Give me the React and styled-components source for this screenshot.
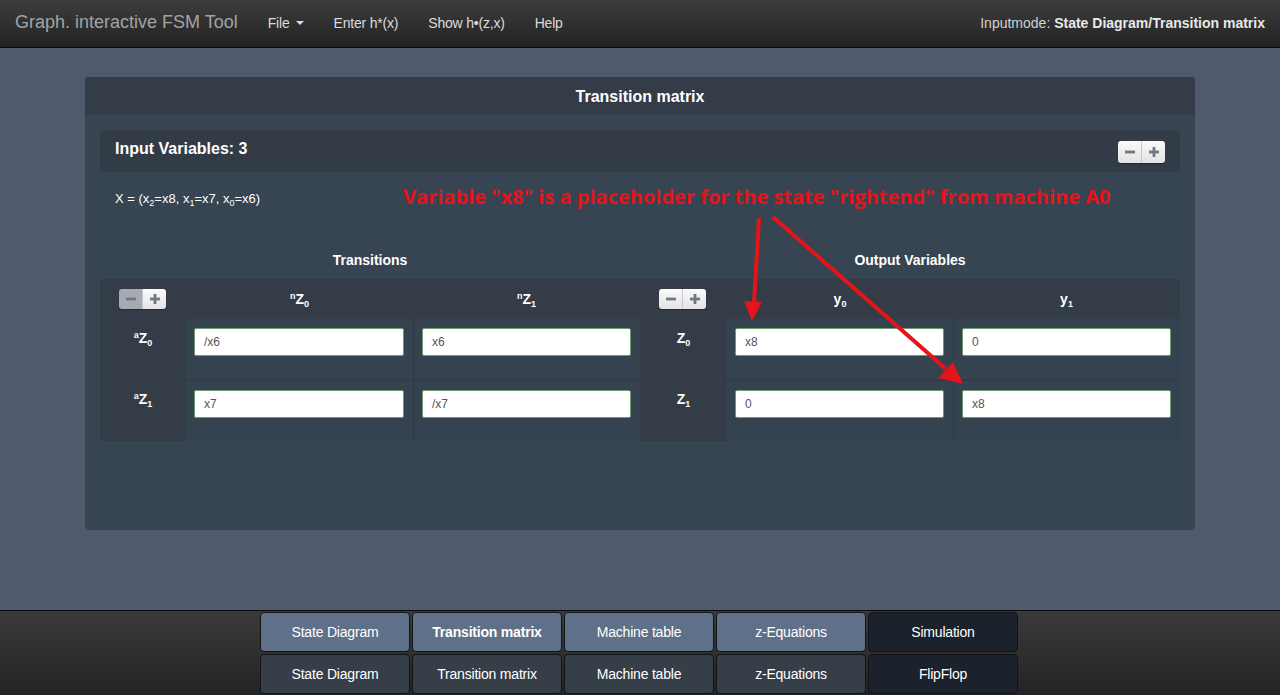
import React from "react";
import styled, { createGlobalStyle } from "styled-components";

const GlobalStyle = createGlobalStyle`
  html, body { margin: 0; padding: 0; }
  body {
    background: #4f5b6c;
    font-family: "Liberation Sans", Arial, sans-serif;
    color: #fff;
  }
  * { box-sizing: border-box; }
`;

const Page = styled.div`
  position: relative;
  height: 695px;
  display: flex;
  flex-direction: column;
  overflow: hidden;
`;

const Navbar = styled.div`
  height: 48px;
  flex: none;
  display: flex;
  align-items: center;
  padding: 0 15px 2px;
  background: linear-gradient(to bottom, #3d3d3d 0%, #222 100%);
  border-bottom: 1px solid #080808;
`;

const Brand = styled.div`
  font-size: 18px;
  color: #a3a3a3;
  margin-right: 30px;
`;

const NavItem = styled.div`
  font-size: 14px;
  letter-spacing: -0.2px;
  color: #dcdcdc;
  margin-right: 30px;
  display: flex;
  align-items: center;
`;

const Caret = styled.span`
  display: inline-block;
  width: 0;
  height: 0;
  margin-left: 6px;
  border-left: 4px solid transparent;
  border-right: 4px solid transparent;
  border-top: 4px solid #dcdcdc;
`;

const NavRight = styled.div`
  margin-left: auto;
  font-size: 14px;
  color: #d0d0d0;
  b { color: #e8e8e8; }
`;

const Main = styled.div`
  flex: 1;
  padding: 29px 85px 0;
`;

const Panel = styled.div`
  height: 453px;
  background: #374451;
  border-radius: 4px;
  overflow: hidden;
`;

const PanelHeader = styled.div`
  height: 38px;
  background: #333c47;
  display: flex;
  align-items: center;
  justify-content: center;
  padding-top: 2px;
  font-size: 16px;
  font-weight: bold;
  color: #fff;
`;

const PanelBody = styled.div`
  padding: 15px;
`;

const SectionHeader = styled.div`
  height: 42px;
  background: #333b46;
  border-radius: 4px 4px 0 0;
  display: flex;
  align-items: center;
  padding: 0 15px 4px;
  font-size: 16px;
  font-weight: bold;
`;

const BtnGroup = styled.div`
  margin-left: ${(p) => (p.$right ? "auto" : "0")};
  margin-top: ${(p) => (p.$right ? "6px" : "0")};
  display: flex;
  height: ${(p) => p.$h || 20}px;
  border-radius: 3px;
  overflow: hidden;
  box-shadow: 0 1px 1px rgba(0, 0, 0, 0.3);
`;

const PmBtn = styled.div`
  height: 100%;
  display: flex;
  align-items: center;
  justify-content: center;
  background: ${(p) =>
    p.$disabled
      ? "#a6abb1"
      : "linear-gradient(to bottom, #fafafa 0%, #e3e3e3 100%)"};
  border-right: ${(p) => (p.$first ? "1px solid #c8c8c8" : "none")};
  width: ${(p) => (p.$first ? 24 : 23)}px;
`;

const PmIcon = ({ plus }) => (
  <svg width="12" height="12" viewBox="0 0 12 12">
    <rect x="1" y="4.6" width="10" height="2.8" fill="#6e7984" />
    {plus && <rect x="4.6" y="1" width="2.8" height="10" fill="#6e7984" />}
  </svg>
);

const PlusMinus = ({ right, disabledMinus, h }) => (
  <BtnGroup $right={right} $h={h}>
    <PmBtn $first $disabled={disabledMinus}>
      <PmIcon />
    </PmBtn>
    <PmBtn>
      <PmIcon plus />
    </PmBtn>
  </BtnGroup>
);

const XRow = styled.div`
  height: 52px;
  display: flex;
  align-items: center;
  padding: 0 15px;
  font-size: 13px;
  color: #fff;
  sub { font-size: 9px; vertical-align: -3px; line-height: 0; }
`;

const Annotation = styled.div`
  margin-left: 143px;
  margin-top: -3px;
  font-family: "Open Sans", "Lato", sans-serif;
  font-weight: bold;
  font-size: 20px;
  letter-spacing: 0;
  color: #e5131a;
  white-space: nowrap;
`;

const Titles = styled.div`
  display: grid;
  grid-template-columns: 540px 540px;
  margin-top: 28px;
  height: 27px;
  align-items: start;
`;

const Title = styled.div`
  text-align: center;
  font-size: 14px;
  font-weight: bold;
  line-height: 16px;
`;

const Tables = styled.div`
  display: grid;
  grid-template-columns: 540px 540px;
`;

const Grid = styled.div`
  display: grid;
  grid-template-columns: ${(p) => p.$cols};
  grid-template-rows: 40px 61px 61px;
`;

const HeadCell = styled.div`
  background: #333c47;
  display: flex;
  align-items: center;
  justify-content: ${(p) => (p.$center ? "center" : "flex-start")};
  padding-left: ${(p) => (p.$center ? 0 : 19)}px;
  font-size: 14px;
  font-weight: bold;
  sup { font-size: 9px; vertical-align: 5px; line-height: 0; }
  sub { font-size: 9px; vertical-align: -3px; line-height: 0; }
`;

const RowHead = styled.div`
  background: #333c47;
  display: flex;
  justify-content: center;
  padding-top: 11px;
  font-size: 14px;
  font-weight: bold;
  sup { font-size: 9px; vertical-align: 5px; line-height: 0; }
  sub { font-size: 9px; vertical-align: -3px; line-height: 0; }
`;

const DataCell = styled.div`
  background: #35424f;
  padding: 9px 9px 0 8px;
  border-left: ${(p) => (p.$divider ? "1px solid #2e3944" : "none")};
  border-top: ${(p) => (p.$top ? "1px solid #2e3944" : "none")};
`;

const Field = styled.div`
  height: 28px;
  background: #fff;
  border: 1px solid #6e9a6e;
  border-radius: 2px;
  display: flex;
  align-items: center;
  padding-left: 9px;
  font-size: 12px;
  color: #555;
`;

const Footer = styled.div`
  height: 85px;
  flex: none;
  background: linear-gradient(to bottom, #3a3a3a 0%, #232323 100%);
  border-top: 1px solid #0a0a0a;
  display: flex;
  justify-content: center;
  padding-top: 1px;
`;

const FooterGrid = styled.div`
  display: grid;
  grid-template-columns: repeat(5, 150px);
  grid-template-rows: 40px 40px;
  gap: 2px;
  margin-left: -2px;
`;

const FBtn = styled.div`
  background: ${(p) => p.$bg};
  border: 1px solid #141414;
  border-radius: 4px;
  display: flex;
  align-items: center;
  justify-content: center;
  font-size: 14px;
  letter-spacing: -0.2px;
  color: #fff;
  font-weight: ${(p) => (p.$bold ? "bold" : "normal")};
`;

const Overlay = styled.svg`
  position: absolute;
  left: 0;
  top: 0;
  pointer-events: none;
`;

const Z = ({ pre, i }) => (
  <span>
    {pre && <sup>{pre}</sup>}Z<sub>{i}</sub>
  </span>
);

const Y = ({ i }) => (
  <span>
    y<sub>{i}</sub>
  </span>
);

export default function App() {
  const trans = [
    ["/x6", "x6"],
    ["x7", "/x7"],
  ];
  const outs = [
    ["x8", "0"],
    ["0", "x8"],
  ];
  const light = "#5f7189";
  const dark = "#1c222b";
  const mid = "#363e48";
  return (
    <Page>
      <GlobalStyle />
      <Navbar>
        <Brand>Graph. interactive FSM Tool</Brand>
        <NavItem>
          File <Caret />
        </NavItem>
        <NavItem>Enter h*(x)</NavItem>
        <NavItem>Show h•(z,x)</NavItem>
        <NavItem>Help</NavItem>
        <NavRight>
          Inputmode: <b>State Diagram/Transition matrix</b>
        </NavRight>
      </Navbar>
      <Main>
        <Panel>
          <PanelHeader>Transition matrix</PanelHeader>
          <PanelBody>
            <SectionHeader>
              Input Variables: 3
              <PlusMinus right h={22} />
            </SectionHeader>
            <XRow>
              <span>
                X = (x<sub>2</sub>=x8, x<sub>1</sub>=x7, x<sub>0</sub>=x6)
              </span>
              <Annotation>
                Variable "x8" is a placeholder for the state "rightend" from
                machine A0
              </Annotation>
            </XRow>
            <Titles>
              <Title>Transitions</Title>
              <Title>Output Variables</Title>
            </Titles>
            <Tables>
              <Grid $cols="86px 227px 227px">
                <HeadCell>
                  <PlusMinus disabledMinus />
                </HeadCell>
                <HeadCell $center>
                  <Z pre="n" i={0} />
                </HeadCell>
                <HeadCell $center>
                  <Z pre="n" i={1} />
                </HeadCell>
                {trans.map((row, r) => (
                  <React.Fragment key={r}>
                    <RowHead>
                      <Z pre="a" i={r} />
                    </RowHead>
                    {row.map((v, c) => (
                      <DataCell key={c} $divider={c > 0} $top={r > 0}>
                        <Field>{v}</Field>
                      </DataCell>
                    ))}
                  </React.Fragment>
                ))}
              </Grid>
              <Grid $cols="87px 226px 227px">
                <HeadCell>
                  <PlusMinus />
                </HeadCell>
                <HeadCell $center>
                  <Y i={0} />
                </HeadCell>
                <HeadCell $center>
                  <Y i={1} />
                </HeadCell>
                {outs.map((row, r) => (
                  <React.Fragment key={r}>
                    <RowHead>
                      <Z i={r} />
                    </RowHead>
                    {row.map((v, c) => (
                      <DataCell key={c} $divider={c > 0} $top={r > 0}>
                        <Field>{v}</Field>
                      </DataCell>
                    ))}
                  </React.Fragment>
                ))}
              </Grid>
            </Tables>
          </PanelBody>
        </Panel>
      </Main>
      <Footer>
        <FooterGrid>
          <FBtn $bg={light}>State Diagram</FBtn>
          <FBtn $bg={light} $bold>
            Transition matrix
          </FBtn>
          <FBtn $bg={light}>Machine table</FBtn>
          <FBtn $bg={light}>z-Equations</FBtn>
          <FBtn $bg={dark}>Simulation</FBtn>
          <FBtn $bg={mid}>State Diagram</FBtn>
          <FBtn $bg={mid}>Transition matrix</FBtn>
          <FBtn $bg={mid}>Machine table</FBtn>
          <FBtn $bg={mid}>z-Equations</FBtn>
          <FBtn $bg={dark}>FlipFlop</FBtn>
        </FooterGrid>
      </Footer>
      <Overlay width="1280" height="695" viewBox="0 0 1280 695">
        <line x1="759" y1="218" x2="754" y2="302" stroke="#e5131a" strokeWidth="4" />
        <polygon points="744,301 762,302 752,321" fill="#e5131a" />
        <line x1="773" y1="217" x2="946" y2="369" stroke="#e5131a" strokeWidth="4" />
        <polygon points="938,378 953,362 963,384" fill="#e5131a" />
      </Overlay>
    </Page>
  );
}
